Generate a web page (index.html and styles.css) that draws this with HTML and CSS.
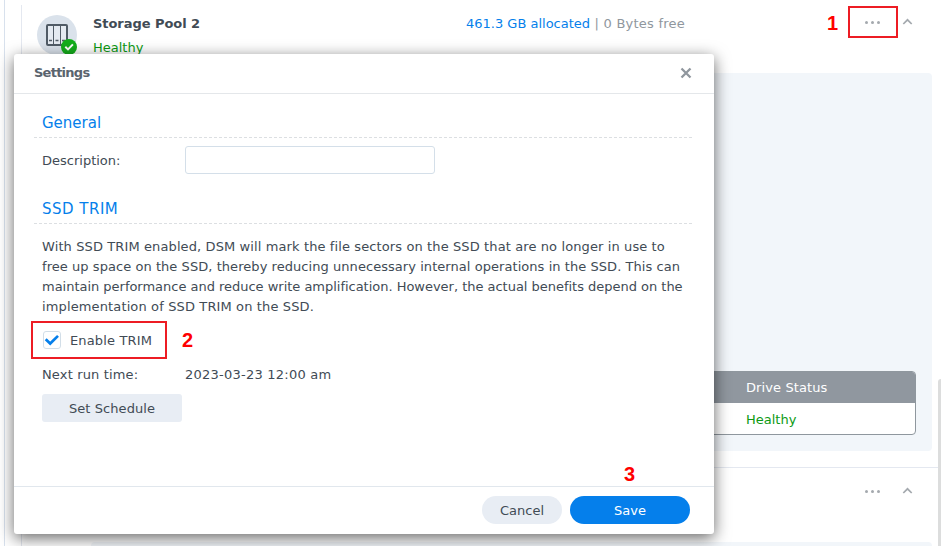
FILE: index.html
```html
<!DOCTYPE html>
<html lang="en">
<head>
<meta charset="utf-8">
<title>Storage Pool Settings</title>
<link rel="stylesheet" href="styles.css">
</head>
<body>
<main class="page">
  <section class="pool">
    <header class="pool-header">
      <div class="pool-icon">
        <svg width="42" height="42" viewBox="0 0 42 42">
          <circle cx="20" cy="20" r="20" fill="#dae2eb"/>
          <rect x="10" y="10" width="20" height="20" rx="1" fill="#e4eaf1" stroke="#505b66" stroke-width="2"/>
          <path d="M16.5 10v20M23.5 10v20" stroke="#505b66" stroke-width="1"/>
          <path d="M12 25.5h3M18.5 25.5h3M25 25.5h3" stroke="#505b66" stroke-width="1.4"/>
          <circle cx="32" cy="32" r="8" fill="#14ad1c"/>
          <path d="M28.3 31.8l2.7 2.6 4.9-5" fill="none" stroke="#fff" stroke-width="2"/>
        </svg>
      </div>
      <div class="pool-title">
        <div class="pool-name">Storage Pool 2</div>
        <div class="healthy">Healthy</div>
      </div>
      <div class="usage"><span class="allocated">461.3 GB allocated</span> | 0 Bytes free</div>
      <div class="actions">
        <svg width="48" height="10" viewBox="0 0 48 10"><g fill="#a4a9ae"><circle cx="1.5" cy="6.5" r="1.5"/><circle cx="7.5" cy="6.5" r="1.5"/><circle cx="13.5" cy="6.5" r="1.5"/></g><path d="M38.3 8l4.2-4.2 4.2 4.2" fill="none" stroke="#a4a9ae" stroke-width="1.7"/></svg>
      </div>
    </header>
    <div class="pool-body">
      <div class="drives">
        <div class="drives-head">Drive Status</div>
        <div class="drives-row healthy">Healthy</div>
      </div>
    </div>
    <div class="next-pool">
      <svg width="48" height="10" viewBox="0 0 48 10"><g fill="#a4a9ae"><circle cx="1.5" cy="6.5" r="1.5"/><circle cx="7.5" cy="6.5" r="1.5"/><circle cx="13.5" cy="6.5" r="1.5"/></g><path d="M38.3 8l4.2-4.2 4.2 4.2" fill="none" stroke="#a4a9ae" stroke-width="1.7"/></svg>
    </div>
    <div class="next-body"></div>
  </section>
  <div class="scrollbar"></div>

  <section class="dialog">
    <header class="dialog-header">
      <h1>Settings</h1>
      <svg width="12" height="12" viewBox="0 0 12 12"><path d="M1.5 1.5l9 9M10.5 1.5l-9 9" stroke="#90979e" stroke-width="2.3"/></svg>
    </header>
    <div class="dialog-body">
      <h2 class="general">General</h2>
      <div class="field"><label for="description">Description:</label><input id="description" type="text"></div>
      <h2 class="trim">SSD TRIM</h2>
      <p><span class="l1">With SSD TRIM enabled, DSM will mark the file sectors on the SSD that are no longer in use to</span><br><span class="l2">free up space on the SSD, thereby reducing unnecessary internal operations in the SSD. This can</span><br><span class="l3">maintain performance and reduce write amplification. However, the actual benefits depend on the</span><br><span class="l4">implementation of SSD TRIM on the SSD.</span></p>
      <div class="check-row">
        <span class="checkbox"><svg width="16" height="16" viewBox="0 0 16 16"><path d="M1.7 7.2l4.5 4.3 7.8-7.6" fill="none" stroke="#057feb" stroke-width="2.7"/></svg></span>
        <span class="check-label">Enable TRIM</span>
      </div>
      <div class="schedule"><span class="run-label">Next run time:</span><span class="run-time">2023-03-23 12:00 am</span></div>
      <button class="set">Set Schedule</button>
    </div>
    <footer class="dialog-footer">
      <button class="cancel">Cancel</button>
      <button class="save">Save</button>
    </footer>
  </section>

  <div class="mark mark-menu"></div>
  <div class="mark mark-check"></div>
  <div class="step step-1">1</div>
  <div class="step step-2">2</div>
  <div class="step step-3">3</div>
</main>
</body>
</html>
```
FILE: styles.css
```css
* { box-sizing: border-box; }
body { margin: 0; }
.page {
  position: relative;
  width: 941px;
  height: 546px;
  overflow: hidden;
  background: #fff;
  color: #414b55;
  font: 13px/20px Verdana, "DejaVu Sans", sans-serif;
  padding: 0 0 0 4px;
}
.page > .pool {
  border-left: 1px solid #e4e8f0;
  margin-left: 17px;
  height: 546px;
  padding-top: 13px;
}
.page::before {
  content: "";
  position: absolute;
  left: 4px;
  top: 0;
  width: 1px;
  height: 546px;
  background: #d8e1ed;
}
.page::after {
  content: "";
  position: absolute;
  left: 20px;
  top: 0;
  width: 3px;
  height: 5px;
  background: #fff;
}
.pool-header { display: flex; height: 60px; padding-left: 15px; }
.pool-icon { width: 56px; padding-top: 2px; }
.pool-title { width: 373px; padding-top: 1px; }
.pool-name { font-weight: bold; letter-spacing: -.05px; height: 24px; }
.healthy { color: #0c9a14; }
.usage { width: 399px; padding-top: 1px; color: #90979e; letter-spacing: .25px; }
.allocated { color: #057feb; letter-spacing: 0; }
.actions { padding-top: 3px; line-height: 0; }
.pool-body {
  height: 378px;
  margin: 0 9px 0 69px;
  background: #f2f6fa;
  border-radius: 4px;
  padding: 298px 16px 0 20px;
}
.drives {
  height: 64px;
  border: 1px solid #8f979e;
  border-radius: 4px;
  overflow: hidden;
  background: #fff;
}
.drives-head, .drives-row { height: 31px; padding-left: 634px; line-height: 31px; }
.drives-head { background: #90979f; color: #fff; letter-spacing: .1px; }
.drives-row { line-height: 33px; }
.next-pool { margin-top: 16px; border-top: 1px solid #e4e8f0; height: 75px; padding: 17px 0 0 843px; line-height: 0; }
.next-body { height: 4px; margin: 0 9px 0 69px; background: #f2f6fa; border-radius: 4px 4px 0 0; }
.scrollbar { position: absolute; left: 938px; top: 379px; width: 6px; height: 180px; border-radius: 3px; background: #dcdddd; }
.dialog {
  position: absolute;
  left: 14px;
  top: 54px;
  width: 700px;
  height: 480px;
  display: flex;
  flex-direction: column;
  background: #fff;
  border-radius: 3px;
  box-shadow: 0 4px 16px rgba(0, 0, 0, .6);
}
.dialog-header {
  height: 40px;
  display: flex;
  justify-content: space-between;
  padding: 9px 22px 0 20px;
  border-bottom: 1px solid #e4e7ea;
}
.dialog-header h1 { margin: 0; font-size: 13px; line-height: 20px; letter-spacing: -.75px; color: #5a646e; }
.dialog-header svg { margin-top: 4px; }
.dialog-body { flex: 1; padding: 15px 20px 0; }
h2 {
  margin: 0;
  height: 29px;
  padding-left: 8px;
  font-size: 15px;
  font-weight: normal;
  line-height: 28px;
  color: #057feb;
  background: repeating-linear-gradient(90deg, #dcdfe2 0 3px, transparent 3px 5px) left bottom / 100% 1px no-repeat;
}
.field { display: flex; height: 36px; margin-top: 8px; padding-left: 8px; line-height: 29px; }
.field label { width: 143px; }
.field input { width: 250px; height: 28px; border: 1px solid #d4dfe9; border-radius: 3px; background: #fff; }
.trim { margin-top: 13px; letter-spacing: .5px; }
p { margin: 13px 0 0 8px; white-space: nowrap; }
.l1 { letter-spacing: .11px; }
.l2 { letter-spacing: .055px; }
.l3 { letter-spacing: -.02px; }
.l4 { letter-spacing: .13px; }
.check-row { display: flex; margin: 14px 0 0 9px; height: 20px; }
.checkbox { width: 18px; height: 18px; border: 1px solid #d2dee8; border-radius: 3px; line-height: 0; }
.check-label { margin-left: 9px; line-height: 19px; letter-spacing: .15px; }
.schedule { display: flex; margin: 14px 0 0 8px; }
.run-label { width: 143px; letter-spacing: .15px; }
.run-time { letter-spacing: .24px; }
button { border: 0; padding: 1px 0 0; color: #414b55; background: #e8edf4; font: inherit; height: 28px; line-height: 28px; }
.set { display: block; width: 140px; margin: 9px 0 0 8px; border-radius: 3px; letter-spacing: .08px; }
.dialog-footer { display: flex; justify-content: flex-end; gap: 8px; height: 48px; padding: 9px 24px 0; border-top: 1px solid #e1e7ed; }
.cancel { width: 80px; border-radius: 14px; }
.save { width: 120px; border-radius: 14px; background: #057feb; color: #fff; }
.mark { position: absolute; border: 2px solid #ed1c24; }
.mark-menu { left: 848px; top: 6px; width: 50px; height: 32px; }
.mark-check { left: 31px; top: 321px; width: 136px; height: 38px; }
.step { position: absolute; font: bold 20px/20px "Liberation Sans", sans-serif; color: #f00; }
.step-1 { left: 827px; top: 13px; }
.step-2 { left: 182px; top: 330px; }
.step-3 { left: 624px; top: 464px; }
```
